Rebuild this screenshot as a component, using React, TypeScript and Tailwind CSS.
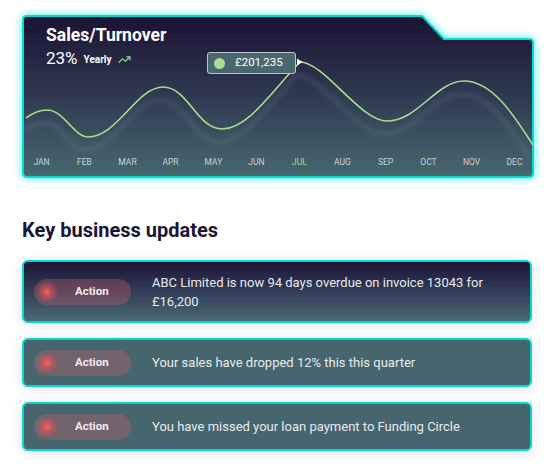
import { TrendingUp } from "lucide-react";

const months = ["JAN", "FEB", "MAR", "APR", "MAY", "JUN", "JUL", "AUG", "SEP", "OCT", "NOV", "DEC"];

const curve =
  "M 4 103 C 12 97, 18 95, 25 95 C 42 95, 52 122, 66 122 C 95 122, 115 72, 141 72 C 166 72, 175 114, 200 114 C 226 114, 250 76, 278 47 C 302 47, 338 106, 365 106 C 396 106, 414 66, 442 66 C 470 66, 492 100, 511 130";

const updates = [
  { text: "ABC Limited is now 94 days overdue on invoice 13043 for £16,200", tall: true },
  { text: "Your sales have dropped 12% this this quarter", tall: false },
  { text: "You have missed your loan payment to Funding Circle", tall: false },
];

function ChartCard() {
  return (
    <div className="relative flex h-[163px] w-[512px] flex-col">
      <svg
        className="absolute inset-0 overflow-visible drop-shadow-[0_0_5px_rgba(0,232,222,0.75)]"
        width="512"
        height="163"
        viewBox="0 0 512 163"
      >
        <defs>
          <linearGradient id="cardBg" x1="0" y1="0" x2="0" y2="1">
            <stop offset="0" stopColor="#1b1233" />
            <stop offset="0.5" stopColor="#2f3a52" />
            <stop offset="1" stopColor="#48686f" />
          </linearGradient>
          <filter id="soft" x="-10%" y="-30%" width="120%" height="160%">
            <feGaussianBlur stdDeviation="2" />
          </filter>
        </defs>
        <path
          d="M 5 1 H 400 L 422 24 H 507 Q 511 24 511 28 V 158 Q 511 162 507 162 H 5 Q 1 162 1 158 V 5 Q 1 1 5 1 Z"
          fill="url(#cardBg)"
          stroke="#00dcd2"
          strokeWidth="2"
        />
      </svg>
      <svg className="absolute inset-0" width="512" height="163" viewBox="0 0 512 163">
        <path d={curve} transform="translate(-3 13)" fill="none" stroke="#7d9ba0" strokeOpacity="0.16" strokeWidth="5" filter="url(#soft)" />
        <path d={curve} fill="none" stroke="#a6dd8c" strokeWidth="1.6" />
        <path d="M 275 43.5 L 280.5 47 L 275 50.5 Z" fill="#ffffff" />
      </svg>

      <div className="relative pl-[24px] pt-[10px]">
        <div className="text-[17.5px] font-bold leading-[20px] text-white">Sales/Turnover</div>
        <div className="mt-[3px] flex items-center">
          <span className="text-[17px] leading-[20px] text-white">23%</span>
          <span className="ml-[6px] mt-[2px] text-[10px] font-bold text-white">Yearly</span>
          <TrendingUp className="ml-[6px] mt-[2px]" size={13} color="#8fd68a" strokeWidth={2.2} />
        </div>
      </div>

      <div className="absolute left-[185px] top-[37px] flex h-[22px] w-[89px] items-center rounded-[3px] border border-[#b9c6ca] bg-[#4a6670]">
        <span className="ml-[6px] h-[11px] w-[11px] rounded-full bg-[#a8e08e]" />
        <span className="ml-[10px] text-[11.5px] leading-none text-white">£201,235</span>
      </div>

      <div className="relative mb-[11px] ml-[-2px] mt-auto grid grid-cols-[repeat(12,43px)]">
        {months.map((m) => (
          <span
            key={m}
            className={`text-center text-[8.5px] leading-[10px] ${m === "JUL" ? "text-[#a6dd8c]" : "text-[#c9d1d5]"}`}
          >
            {m}
          </span>
        ))}
      </div>
    </div>
  );
}

function UpdateCard({ text, tall }: { text: string; tall: boolean }) {
  return (
    <div
      className={`flex w-[510px] items-center rounded-[6px] border-2 border-[#00d8cf] shadow-[0_2px_12px_rgba(0,0,0,0.13)] ${
        tall
          ? "h-[63px] bg-[linear-gradient(180deg,#1d1535_0%,#34405a_55%,#4a6a72_100%)]"
          : "h-[49px] bg-[#46656e]"
      }`}
    >
      <div className="ml-[10px] flex h-[26px] w-[97px] shrink-0 items-center rounded-full bg-[rgba(210,95,110,0.32)]">
        <span className="ml-[2px] h-[22px] w-[22px] rounded-full bg-[radial-gradient(circle,#ff6060_0%,rgba(240,85,85,0.55)_30%,rgba(240,85,85,0)_70%)]" />
        <span className="ml-[17px] text-[11.5px] font-bold text-[#f1ecee]">Action</span>
      </div>
      <p className="ml-[21px] w-[360px] text-[13px] leading-[19px] text-[#e7ebed]">{text}</p>
    </div>
  );
}

export default function App() {
  return (
    <div className="h-[472px] w-[554px] overflow-hidden bg-white pl-[22px] pt-[15px] font-['Roboto',sans-serif]">
      <ChartCard />
      <h2 className="mt-[41px] text-[20px] font-bold leading-[23px] text-[#1a1535]">Key business updates</h2>
      <div className="mt-[18px] flex flex-col gap-[15px]">
        {updates.map((u) => (
          <UpdateCard key={u.text} text={u.text} tall={u.tall} />
        ))}
      </div>
    </div>
  );
}
